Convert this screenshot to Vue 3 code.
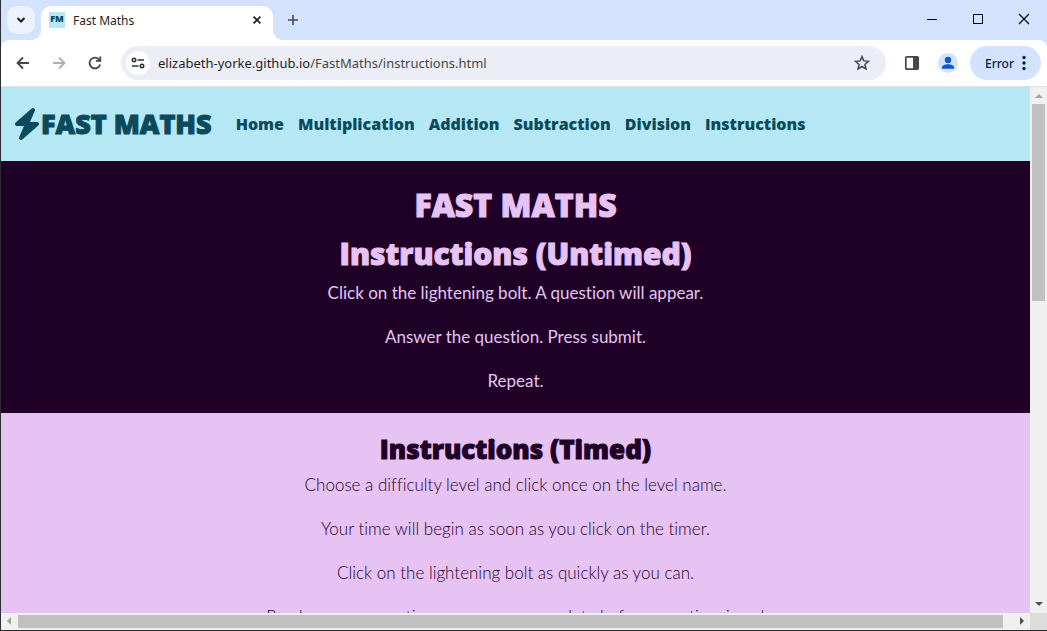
<script setup>
const links = ['Home', 'Multiplication', 'Addition', 'Subtraction', 'Division', 'Instructions']
const untimed = [
  'Click on the lightening bolt. A question will appear.',
  'Answer the question. Press submit.',
  'Repeat.',
]
const timed = [
  'Choose a difficulty level and click once on the level name.',
  'Your time will begin as soon as you click on the timer.',
  'Click on the lightening bolt as quickly as you can.',
  'Read as many questions as you can complete before your time is up!',
]
</script>

<template>
  <div class="window">
    <header class="tabstrip">
      <button class="tab-search" aria-label="Search tabs">
        <svg width="10" height="8" viewBox="0 0 10 8"><path d="M1.5 2 5 5.5 8.500 2" fill="none" stroke="#1f1f1f" stroke-width="2" /></svg>
      </button>
      <div class="tab">
        <span class="favicon">FM</span>
        <span class="tab-title">Fast Maths</span>
        <button class="tab-close" aria-label="Close tab">
          <svg width="8" height="8" viewBox="0 0 8 8"><path d="M.6.6 7.400 7.400M7.400.6.6 7.400" stroke="#1f1f1f" stroke-width="1.7" /></svg>
        </button>
      </div>
      <button class="new-tab" aria-label="New tab">
        <svg width="12" height="12" viewBox="0 0 12 12"><path d="M6 1v10M1 6h10" stroke="#474747" stroke-width="1.6" /></svg>
      </button>
      <div class="controls">
        <button aria-label="Minimise"><svg width="12" height="12" viewBox="0 0 12 12"><path d="M1 6.500h10" stroke="#000" /></svg></button>
        <button aria-label="Maximise"><svg width="12" height="12" viewBox="0 0 12 12"><path d="M1.500 1.500h9v9h-9z" fill="none" stroke="#000" /></svg></button>
        <button aria-label="Close"><svg width="12" height="12" viewBox="0 0 12 12"><path d="m1 1 10 10M11 1 1 11" stroke="#000" stroke-width="1.1" /></svg></button>
      </div>
    </header>

    <div class="toolbar">
      <button class="tool" aria-label="Back">
        <svg width="16" height="16" viewBox="0 0 16 16"><path d="M14 8H3M8 2.500 2.500 8 8 13.500" fill="none" stroke="#474747" stroke-width="1.8" /></svg>
      </button>
      <button class="tool" aria-label="Forward">
        <svg width="16" height="16" viewBox="0 0 16 16"><path d="M2 8h11M8 2.500 13.500 8 8 13.500" fill="none" stroke="#b0b0b0" stroke-width="1.8" /></svg>
      </button>
      <button class="tool" aria-label="Reload">
        <svg width="16" height="16" viewBox="0 0 16 16"><path d="M13.200 9.400A5.400 5.400 0 1 1 12 4.400L13.500 6" fill="none" stroke="#474747" stroke-width="1.8" /><path d="M14.200 1.500v5.300H8.900V5h3.500V1.500z" fill="#474747" /></svg>
      </button>
      <div class="omnibox">
        <button class="site-info" aria-label="View site information">
          <svg width="14" height="12" viewBox="0 0 14 12"><g fill="none" stroke="#333" stroke-width="1.600"><circle cx="3" cy="3" r="1.700" /><path d="M6.500 3H13M1 9h6.500" /><circle cx="11" cy="9" r="1.700" /></g></svg>
        </button>
        <div class="url" role="textbox" aria-label="Address">elizabeth-yorke.github.io<span>/FastMaths/instructions.html</span></div>
        <button class="star" aria-label="Bookmark this tab">
          <svg width="16" height="16" viewBox="0 0 16 16"><path d="m8 1.600 1.800 4.300 4.700.4-3.600 3.100 1.100 4.600L8 11.500 4 14l1.100-4.600L1.500 6.300l4.700-.4z" fill="none" stroke="#474747" stroke-width="1.500" /></svg>
        </button>
      </div>
      <button class="panel" aria-label="Side panel">
        <svg width="16" height="16" viewBox="0 0 16 16"><rect x="1.800" y="1.800" width="12.400" height="12.400" rx="1" fill="none" stroke="#474747" stroke-width="1.700" /><path d="M9 2h5v12H9z" fill="#474747" /></svg>
      </button>
      <button class="profile" aria-label="Profile">
        <svg width="20" height="20" viewBox="0 0 20 20"><circle cx="10" cy="10" r="10" fill="#d3e3fd" /><circle cx="10" cy="7" r="3.200" fill="#0b57d0" /><path d="M4 15.800v-1.600C4 12.400 7 11.200 10 11.200s6 1.200 6 3v1.600z" fill="#0b57d0" /></svg>
      </button>
      <button class="error">
        <span>Error</span>
        <svg width="4" height="16" viewBox="0 0 4 16" fill="#041e49"><circle cx="2" cy="2.500" r="1.700" /><circle cx="2" cy="8" r="1.700" /><circle cx="2" cy="13.500" r="1.700" /></svg>
      </button>
    </div>

    <div class="viewport">
      <div class="page">
        <nav class="site-nav">
          <a class="brand" href="#">
            <svg width="28" height="32" viewBox="0 0 448 512"><path fill="currentColor" d="M349.400 44.600c5.900-13.700 1.500-29.700-10.600-38.500s-28.600-8-39.900 1.800l-256 224c-10 8.800-13.600 22.900-8.900 35.300S50.700 288 64 288H175.500L98.600 467.400c-5.900 13.700-1.500 29.700 10.600 38.500s28.600 8 39.900-1.800l256-224c10-8.800 13.600-22.900 8.900-35.300s-16.600-20.700-30-20.700H272.500L349.400 44.600z" /></svg>
            <span>FAST MATHS</span>
          </a>
          <div class="links">
            <a v-for="link in links" :key="link" href="#">{{ link }}</a>
          </div>
        </nav>
        <main>
          <section class="untimed">
            <h1>FAST MATHS</h1>
            <h2>Instructions (Untimed)</h2>
            <p v-for="line in untimed" :key="line">{{ line }}</p>
          </section>
          <section class="timed">
            <h3>Instructions (Timed)</h3>
            <p v-for="line in timed" :key="line">{{ line }}</p>
          </section>
        </main>
      </div>
      <div class="bar vertical" aria-hidden="true">
        <svg width="17" height="17" viewBox="0 0 17 17"><path d="m5 11 4-4 4 4z" fill="#a3a3a3" /></svg>
        <div class="track"><div class="thumb"></div></div>
        <svg width="17" height="17" viewBox="0 0 17 17"><path d="m5 6 4 4 4-4z" fill="#505050" /></svg>
      </div>
      <div class="bar horizontal" aria-hidden="true">
        <svg width="17" height="17" viewBox="0 0 17 17"><path d="m10 4-4 4 4 4z" fill="#a3a3a3" /></svg>
        <div class="track"><div class="thumb"></div></div>
        <svg width="17" height="17" viewBox="0 0 17 17"><path d="m7 4 4 4-4 4z" fill="#505050" /></svg>
      </div>
      <div class="corner"></div>
    </div>
  </div>
</template>

<style>
body { margin: 0; overflow: hidden; }
</style>

<style scoped>
* { box-sizing: border-box; }
svg { display: block; flex: none; }
button {
  display: flex; align-items: center; justify-content: center; flex: none;
  padding: 0; border: 0; background: none; font: inherit; color: inherit;
}
a { color: inherit; text-decoration: none; }
.window {
  display: flex; flex-direction: column; height: 100vh;
  border-left: 1px solid #2b2d33; border-bottom: 1px solid #2b2b2b;
  background: #d3e3fd; font-family: "Noto Sans", sans-serif; color: #1f1f1f;
}
.tabstrip { display: flex; flex: none; height: 40px; padding-left: 6px; }
.tab-search { width: 28px; height: 28px; margin: 6px 6px 0 0; border-radius: 10px; background: #ecf3fe; }
.tab {
  position: relative; display: flex; align-items: center; width: 232px; height: 34px; margin-top: 6px;
  padding: 0 10px 6px 8px; border-radius: 10px 10px 0 0; background: #fff; font-size: 12px;
}
.tab::before, .tab::after { content: ""; position: absolute; bottom: 0; width: 10px; height: 10px; }
.tab::before { left: -10px; background: radial-gradient(circle at 0 0, transparent 10px, #fff 10px); }
.tab::after { right: -10px; background: radial-gradient(circle at 100% 0, transparent 10px, #fff 10px); }
.favicon {
  width: 16px; height: 16px; background: #b5e7f4; color: #094a5c;
  font: 800 9px/14px "Open Sans", sans-serif; text-align: center;
}
.tab-title { flex: 1; margin-left: 8px; }
.tab-close { width: 12px; height: 16px; }
.new-tab { width: 28px; height: 28px; margin: 6px 0 0 6px; }
.controls { display: flex; margin-left: auto; }
.controls button { width: 46px; height: 38px; }
.toolbar {
  display: flex; align-items: center; flex: none; height: 47px; padding: 0 6px 0 4px;
  border-bottom: 1px solid #dde1e3; border-radius: 8px 8px 0 0; background: #fff;
}
.tool { width: 36px; height: 34px; }
.omnibox {
  display: flex; flex: 1; align-items: center; height: 34px; margin-left: 8px; padding: 0 16px 0 5px;
  border-radius: 17px; background: #ebeef7;
}
.site-info { width: 24px; height: 24px; border-radius: 12px; background: #fff; }
.url { flex: 1; margin-left: 8px; font-size: 13px; white-space: nowrap; }
.url span { color: #474747; }
.panel { width: 16px; margin-left: 18px; }
.profile { width: 20px; margin: 0 12px 0 18px; }
.error {
  gap: 8px; width: 71px; height: 34px; border-radius: 17px; background: #d3e3fd;
  color: #041e49; font-size: 12px; font-weight: 500;
}
.viewport { display: grid; flex: 1; min-height: 0; grid-template: minmax(0, 1fr) 17px / minmax(0, 1fr) 17px; background: #f0f0f0; }
.page {
  overflow: hidden; background: #e7c3f3;
  font-family: Lato, sans-serif; font-size: 17px; line-height: 24px; font-variant-ligatures: none;
}
.site-nav {
  display: flex; align-items: center; height: 74px; padding: 0 12px;
  background: #b5e7f4; color: #094a5c; font-family: "Open Sans", sans-serif; font-weight: 800;
}
.brand {
  display: flex; align-items: center; margin-right: 24px;
  font-size: 27px; line-height: 40px; white-space: nowrap;
}
.brand span, h1, h2, h3 { -webkit-text-stroke: 1px currentColor; }
.links { display: flex; gap: 14px; font-size: 16px; }
section { padding: 20px 0; text-align: center; }
h1, h2, h3 { margin: 0 0 8px; font-family: "Open Sans", sans-serif; font-weight: 800; }
h1 { margin-bottom: 6px; font-size: 32px; line-height: 48px; }
h2 { font-size: 30px; line-height: 38px; }
h3 { font-size: 26px; line-height: 32px; }
p { margin: 0 0 20px; }
p:last-child { margin-bottom: 0; }
.untimed { background: #1f0128; color: #e7c3f3; }
.timed { color: #1f0128; }
.timed p { font-weight: 300; }
.bar { display: flex; background: #f0f0f0; }
.vertical { flex-direction: column; grid-area: 1 / 2; }
.horizontal { grid-area: 2 / 1; }
.track { flex: 1; }
.thumb { background: #c0c0c0; }
.vertical .thumb { width: 13px; height: 40%; margin: 0 2px; }
.horizontal .thumb { width: 99%; height: 13px; margin: 2px 0; }
.corner { background: #dcdcdc; grid-area: 2 / 2; }
</style>
